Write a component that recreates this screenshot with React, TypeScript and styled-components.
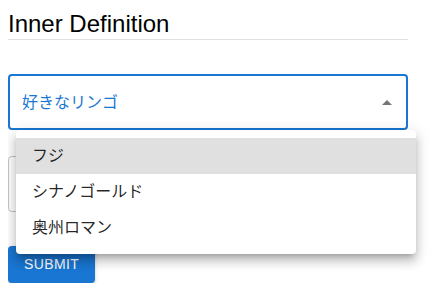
import React from 'react';
import styled, {createGlobalStyle} from 'styled-components';

const GlobalStyle = createGlobalStyle`
    body {
        margin: 8px;
        background: #fff;
        font-family: "Liberation Sans", "Noto Sans CJK JP", Arial, sans-serif;
        color: rgba(0, 0, 0, 0.87);
    }
`

const Page = styled.div`
    width: 400px;
`

const Title = styled.h5`
    margin: 0;
    font-size: 24px;
    line-height: 31px;
    font-weight: 400;
    color: #000;
`

const Divider = styled.hr`
    margin: 0;
    border: none;
    border-top: 1px solid rgba(0, 0, 0, 0.12);
`

const Form = styled.form`
    display: flex;
    flex-direction: column;
    align-items: flex-start;
    margin-top: 34px;
`

const SelectWrap = styled.div`
    position: relative;
    width: 100%;
    z-index: 2;
`

const SelectBox = styled.div`
    box-sizing: border-box;
    display: flex;
    align-items: center;
    justify-content: space-between;
    height: 56px;
    padding: 0 7px 0 12px;
    border: 2px solid #1976d2;
    border-radius: 4px;
`

const SelectValue = styled.span`
    font-size: 16px;
    color: #1976d2;
    line-height: 23px;
`

const Arrow = styled.svg`
    width: 24px;
    height: 24px;
    fill: rgba(0, 0, 0, 0.54);
    transform: rotate(180deg);
    margin-top: 1px;
`

const Menu = styled.ul`
    position: absolute;
    top: 100%;
    left: 8px;
    width: 400px;
    margin: 0;
    padding: 8px 0;
    list-style: none;
    background: #fff;
    border-radius: 4px;
    box-shadow: 0px 5px 5px -3px rgba(0, 0, 0, 0.2),
        0px 8px 10px 1px rgba(0, 0, 0, 0.14),
        0px 3px 14px 2px rgba(0, 0, 0, 0.12);
`

const MenuItem = styled.li<{selected?: boolean}>`
    padding: 6px 16px;
    font-size: 16px;
    line-height: 24px;
    color: rgba(0, 0, 0, 0.87);
    background: ${props => props.selected ? '#e0e0e0' : 'transparent'};
`

const TextField = styled.div`
    box-sizing: border-box;
    width: 100%;
    height: 56px;
    margin-top: 26px;
    border: 1px solid rgba(0, 0, 0, 0.23);
    border-radius: 4px;
`

const SubmitButton = styled.button`
    margin-top: 34px;
    padding: 6px 16px;
    border: none;
    border-radius: 4px;
    background: #1976d2;
    color: #fff;
    font-family: "Liberation Sans", Arial, sans-serif;
    font-size: 14px;
    line-height: 24.5px;
    letter-spacing: 0.4px;
    text-transform: uppercase;
    box-shadow: 0px 3px 1px -2px rgba(0, 0, 0, 0.2),
        0px 2px 2px 0px rgba(0, 0, 0, 0.14),
        0px 1px 5px 0px rgba(0, 0, 0, 0.12);
`

const apples = ['フジ', 'シナノゴールド', '奥州ロマン'];

const App = () => {
    return (
        <Page>
            <GlobalStyle/>
            <Title>Inner Definition</Title>
            <Divider/>
            <Form onSubmit={e => e.preventDefault()}>
                <SelectWrap>
                    <SelectBox>
                        <SelectValue>好きなリンゴ</SelectValue>
                        <Arrow viewBox="0 0 24 24"><path d="M7 10l5 5 5-5z"/></Arrow>
                    </SelectBox>
                    <Menu>
                        {apples.map((item, i) => <MenuItem key={item} selected={i === 0}>{item}</MenuItem>)}
                    </Menu>
                </SelectWrap>
                <TextField/>
                <SubmitButton type="submit">Submit</SubmitButton>
            </Form>
        </Page>
    )
};

export default App;
